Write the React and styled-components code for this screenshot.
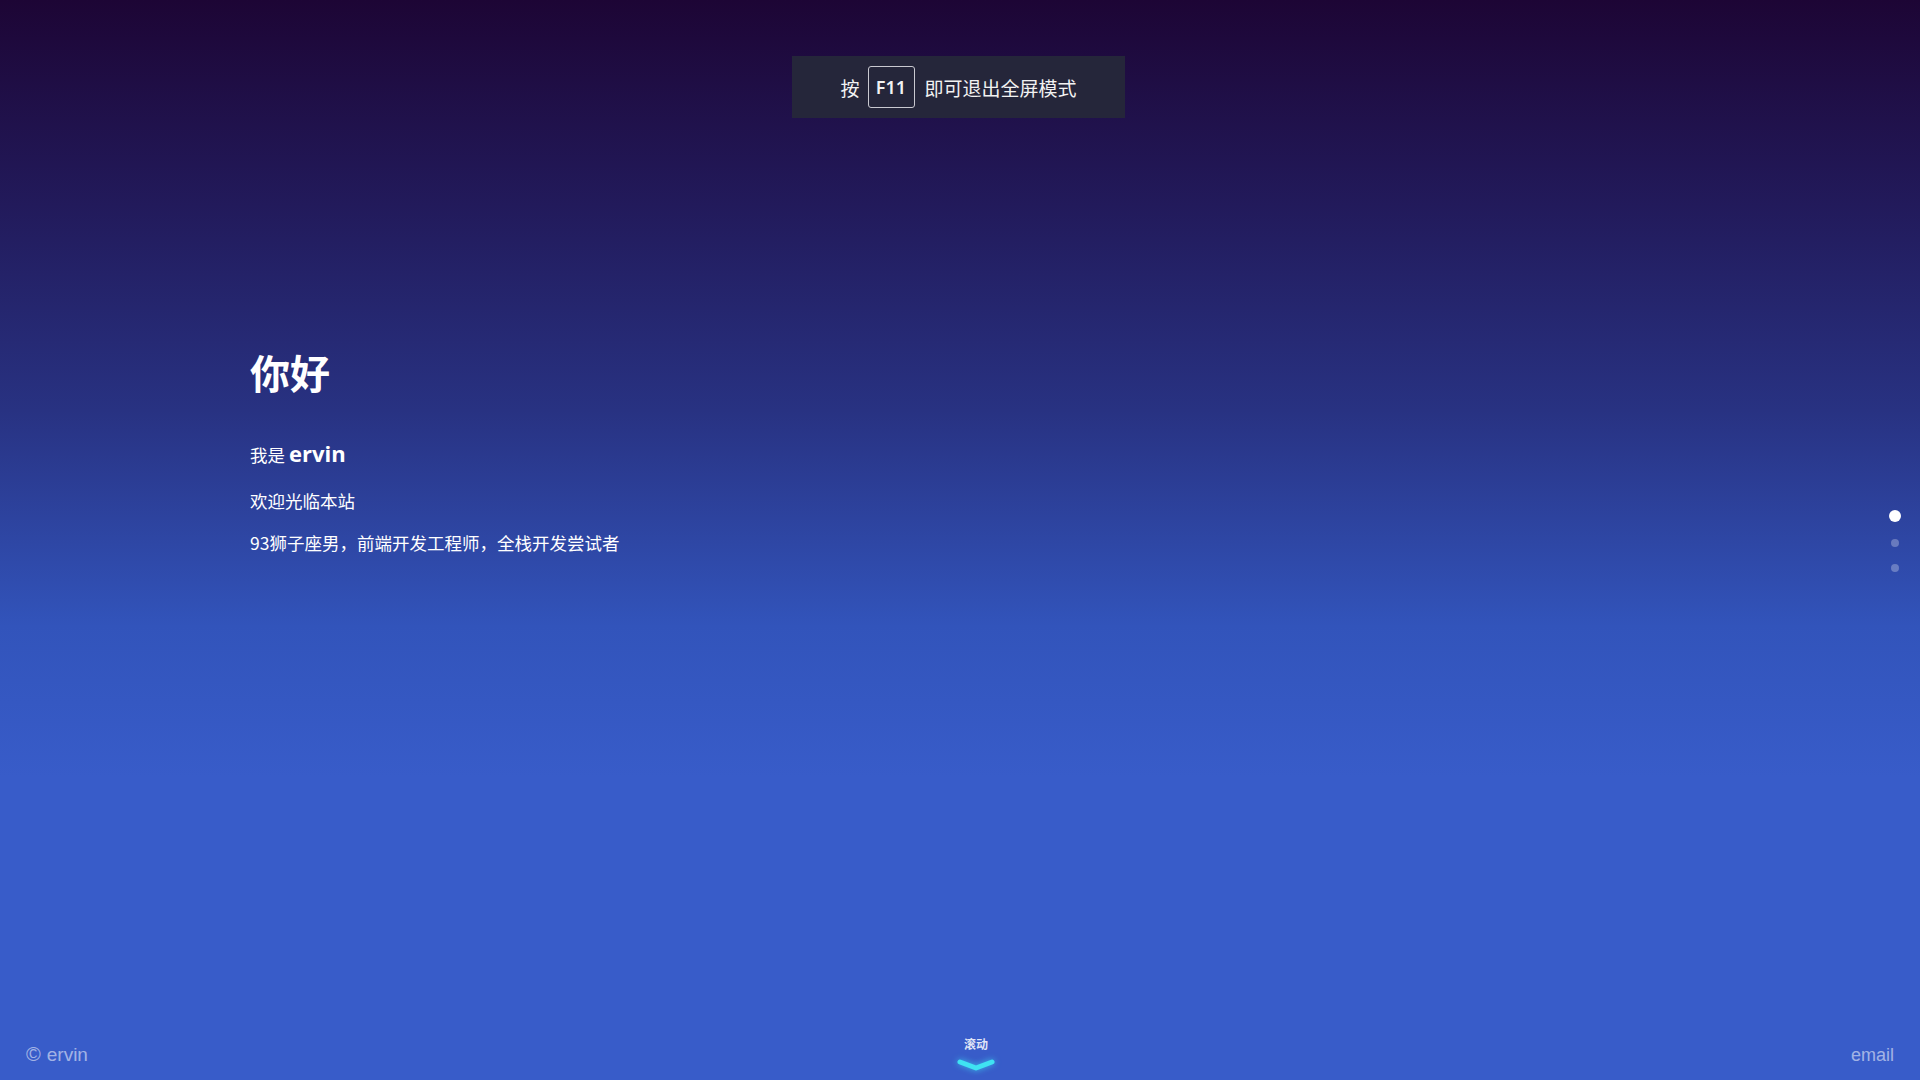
import React from 'react'
import styled, { createGlobalStyle } from 'styled-components'

const GlobalStyle = createGlobalStyle`
  html, body {
    margin: 0;
    padding: 0;
    height: 100%;
  }
  body {
    font-family: 'Noto Sans', 'Noto Sans CJK SC', sans-serif;
    color: #fff;
    overflow: hidden;
  }
`

const Page = styled.div`
  position: relative;
  width: 100vw;
  height: 100vh;
  display: grid;
  grid-template-rows: 1fr auto;
  background: linear-gradient(
    180deg,
    #1d0535 0%,
    #221a5b 19%,
    #283282 38%,
    #3254bb 58%,
    #385cc9 72%,
    #385cc9 100%
  );
`

const Hero = styled.section`
  padding: 346px 0 0 250px;
  display: flex;
  flex-direction: column;
`

const Hello = styled.h1`
  margin: 0 0 40px;
  font-size: 40px;
  line-height: 52px;
  font-weight: 700;
  font-family: 'Noto Sans CJK SC', sans-serif;
`

const Intro = styled.p`
  margin: 0 0 16px;
  font-size: 17.5px;
  line-height: 30px;
  font-family: 'Noto Sans CJK SC', sans-serif;

  strong {
    font-family: 'Open Sans', 'Noto Sans CJK SC', sans-serif;
    font-size: 22px;
    font-weight: 700;
  }
`

const Line = styled.p`
  margin: 0 0 12px;
  font-size: 17.5px;
  line-height: 30px;
  font-family: 'Noto Sans CJK SC', sans-serif;
`

const Footer = styled.footer`
  display: grid;
  grid-template-columns: 1fr auto 1fr;
  align-items: end;
  padding: 0 26px 14px;
`

const FootText = styled.span`
  font-family: 'Liberation Sans', Arial, sans-serif;
  font-size: ${p => (p.right ? 18 : 19)}px;
  line-height: 22px;
  color: rgba(255, 255, 255, 0.55);
  justify-self: ${p => (p.right ? 'end' : 'start')};

  i {
    font-style: normal;
    font-size: 20px;
    margin-right: 6px;
  }
`

const Scroll = styled.div`
  display: flex;
  flex-direction: column;
  align-items: center;
  gap: 6px;
  margin: 0 0 -6px 32px;
  font-family: 'Noto Sans CJK SC', sans-serif;
  font-size: 12px;
  font-weight: 700;
  color: rgba(255, 255, 255, 0.85);

  svg {
    filter: drop-shadow(0 0 3px rgba(60, 230, 250, 0.7));
  }
`

const Bubble = styled.div`
  position: absolute;
  top: 56px;
  left: 792px;
  width: 333px;
  height: 62px;
  display: flex;
  align-items: center;
  justify-content: center;
  gap: 8px;
  background: #25263a;
  font-family: 'Noto Sans CJK SC', sans-serif;
  font-size: 19px;
  color: #f2f2f2;
`

const Key = styled.span`
  display: inline-flex;
  align-items: center;
  justify-content: center;
  width: 45px;
  height: 40px;
  margin-right: 2px;
  border: 1px solid #c9c9d0;
  border-radius: 3px;
  font-family: 'Noto Sans', sans-serif;
  font-weight: 600;
  font-size: 18px;
`

const Dots = styled.nav`
  position: absolute;
  right: 19px;
  top: 510px;
  display: flex;
  flex-direction: column;
  align-items: center;
  gap: 17px;
`

const Dot = styled.span`
  display: block;
  width: ${p => (p.active ? 12 : 8)}px;
  height: ${p => (p.active ? 12 : 8)}px;
  border-radius: 50%;
  background: ${p => (p.active ? '#fff' : 'rgba(255,255,255,0.28)')};
`

export default function App() {
  return (
    <>
      <GlobalStyle />
      <Page>
        <Hero>
          <Hello>你好</Hello>
          <Intro>
            我是 <strong>ervin</strong>
          </Intro>
          <Line>欢迎光临本站</Line>
          <Line>93狮子座男，前端开发工程师，全栈开发尝试者</Line>
        </Hero>
        <Footer>
          <FootText>
            <i>©</i>ervin
          </FootText>
          <Scroll>
            <span>滚动</span>
            <svg width="38" height="14" viewBox="0 0 38 14">
              <polyline
                points="3,4 19,10 35,4"
                fill="none"
                stroke="#3fe3f2"
                strokeWidth="5"
                strokeLinecap="round"
                strokeLinejoin="round"
              />
            </svg>
          </Scroll>
          <FootText right>email</FootText>
        </Footer>
        <Dots>
          <Dot active />
          <Dot />
          <Dot />
        </Dots>
        <Bubble>
          按 <Key>F11</Key> 即可退出全屏模式
        </Bubble>
      </Page>
    </>
  )
}
